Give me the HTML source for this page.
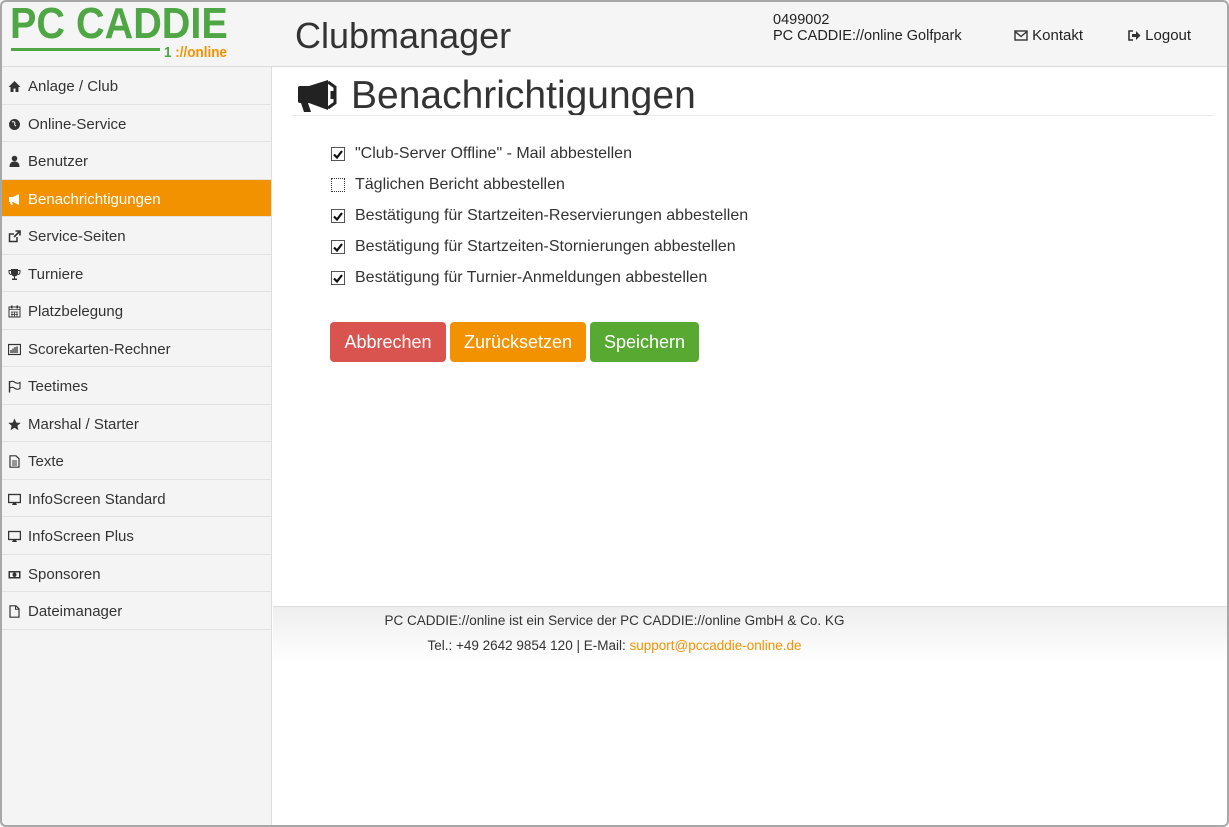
<!DOCTYPE html>
<html><head><meta charset="utf-8"><style>
*{box-sizing:border-box;margin:0;padding:0}
body{width:1229px;height:827px;background:#fff;font-family:"Liberation Sans",sans-serif;color:#333;overflow:hidden;position:relative}
.frame{position:absolute;left:0;top:0;width:1229px;height:827px;border:2px solid #a8a8a8;border-radius:6px;pointer-events:none;z-index:10}
.header{position:absolute;left:0;top:0;width:1229px;height:67px;background:#f5f5f5;border-bottom:1px solid #ddd}
.logo{position:absolute;left:10px;top:-1px;font:bold 44px "Liberation Sans",sans-serif;color:#4ea644;transform:scaleX(0.9);transform-origin:left;white-space:nowrap}
.logoline{position:absolute;left:11px;top:48px;width:149px;height:3px;background:#4ea644}
.online{position:absolute;left:164px;top:44px;font:bold 15px "Liberation Sans",sans-serif;color:#f39200;transform:scaleX(0.9);transform-origin:left}
.online b{color:#4ea644}
.cm{position:absolute;left:295px;top:15px;font-size:36px;color:#333}
.acct{position:absolute;left:773px;top:12px;font-size:14.5px;line-height:16px;color:#222}
.hl{position:absolute;top:27px;font-size:15px;color:#222}
.side{position:absolute;left:0;top:67px;width:272px;height:760px;background:#f4f4f4;border-right:1px solid #ddd}
.item{height:37.5px;border-bottom:1px solid #e2e2e2;display:flex;align-items:center;padding-left:8px;padding-top:3px;font-size:15px;color:#333}
.item svg{width:13px;height:13px;margin-right:7px;flex:none}
.item.act{background:#f39200;color:#fff}
h1{position:absolute;left:297px;top:74px;font-size:39px;font-weight:normal;color:#333;display:flex;align-items:center}
h1 svg{margin-right:14px}
.hr{position:absolute;left:292px;top:115px;width:921px;height:1px;background:#e8e8e8}
.cb{position:absolute;left:331px;font-size:16px;color:#333;display:flex;align-items:center}
.cb i{width:14px;height:14px;border:1px solid #555;margin-right:10px;display:inline-flex;align-items:center;justify-content:center;background:#fff}
.cb i.un{border:1px dotted #333}
.btn{position:absolute;top:322px;height:40px;border-radius:4px;color:#fff;font-size:18px;display:flex;align-items:center;justify-content:center;padding-top:1px}
.foot{position:absolute;left:273px;top:606px;width:954px;height:56px;border-top:1px solid #ddd;background:linear-gradient(#eee,#fff)}
.ft{position:absolute;left:0;width:1229px;text-align:center;font-size:13.5px;color:#333}
</style></head><body>
<div class="header">
<div class="logo">PC CADDIE</div>
<div class="logoline"></div>
<div class="online"><b>1</b> ://online</div>
<div class="cm">Clubmanager</div>
<div class="acct">0499002<br>PC CADDIE://online Golfpark</div>
<div class="hl" style="left:1014px"><svg width="14" height="11" viewBox="0 0 14 11" style="vertical-align:-1px"><rect x="1" y="1" width="12" height="9" fill="none" stroke="#333" stroke-width="1.4"/><path d="M1 1.5L7 6.5L13 1.5" fill="none" stroke="#333" stroke-width="1.4"/></svg> Kontakt</div>
<div class="hl" style="left:1128px"><svg width="13" height="11" viewBox="0 0 13 11" style="vertical-align:-1px"><path d="M5 1H1V10H5" fill="none" stroke="#333" stroke-width="1.6"/><path d="M4 4H8V1L12.5 5.5L8 10V7H4Z" fill="#333"/></svg> Logout</div>
</div>
<div class="side">
<div class="item"><svg viewBox="0 0 13 13"><path d="M6.5 1L0.5 7H2.5V12H5.5V8.5H7.5V12H10.5V7H12.5Z" fill="#333"/></svg>Anlage / Club</div>
<div class="item"><svg viewBox="0 0 13 13"><circle cx="6.5" cy="6.5" r="5.5" fill="#333"/><path d="M4 4Q6 3 7 5Q6 7 8 8" stroke="#f4f4f4" fill="none"/></svg>Online-Service</div>
<div class="item"><svg viewBox="0 0 13 13"><circle cx="6.5" cy="3.5" r="2.8" fill="#333"/><path d="M1.5 12Q1.5 6.5 6.5 6.5Q11.5 6.5 11.5 12Z" fill="#333"/></svg>Benutzer</div>
<div class="item act"><svg viewBox="0 0 13 13"><path d="M1 4H5L11 1V12L5 9H4L5 12H3L2 9H1Z" fill="#fff"/></svg>Benachrichtigungen</div>
<div class="item"><svg viewBox="0 0 13 13"><path d="M9 7V11.5H1.5V4H6" fill="none" stroke="#333" stroke-width="1.5"/><path d="M7.5 1H12V5.5M12 1L6 7" fill="none" stroke="#333" stroke-width="1.6"/></svg>Service-Seiten</div>
<div class="item"><svg viewBox="0 0 13 13"><path d="M3 1H10V5Q10 8 6.5 8.5Q3 8 3 5ZM6 8.5H7V10.5H9V12H4V10.5H6Z" fill="#333"/><path d="M3 2.5H1V4Q1 6 3 6.5M10 2.5H12V4Q12 6 10 6.5" fill="none" stroke="#333"/></svg>Turniere</div>
<div class="item"><svg viewBox="0 0 13 13"><rect x="1" y="2" width="11" height="10" fill="none" stroke="#333"/><path d="M1 4.5H12M3 7H10M3 9.5H10M4 7V12M6.5 7V12M9 7V12" stroke="#333" stroke-width=".8"/><rect x="3" y="0.5" width="1.5" height="3" fill="#333"/><rect x="8.5" y="0.5" width="1.5" height="3" fill="#333"/></svg>Platzbelegung</div>
<div class="item"><svg viewBox="0 0 13 13"><rect x="0.5" y="1.5" width="12" height="10" fill="none" stroke="#333" stroke-width="1.2"/><path d="M3 10V7M5 10V5.5M7 10V4M9 10V3.5" stroke="#333" stroke-width="1.3"/></svg>Scorekarten-Rechner</div>
<div class="item"><svg viewBox="0 0 13 13"><path d="M1.5 1V12.5" stroke="#333" stroke-width="1.4"/><path d="M2 2Q5 0.5 7 2.5Q9.5 4 12 2.5V8.5Q9.5 10 7 8.5Q5 6.5 2 8" fill="none" stroke="#333" stroke-width="1.1"/></svg>Teetimes</div>
<div class="item"><svg viewBox="0 0 13 13"><path d="M6.5 0.5L8.3 4.6L12.7 4.9L9.4 7.8L10.4 12.2L6.5 9.8L2.6 12.2L3.6 7.8L0.3 4.9L4.7 4.6Z" fill="#333"/></svg>Marshal / Starter</div>
<div class="item"><svg viewBox="0 0 13 13"><path d="M2 0.8H8L11 3.8V12.2H2Z" fill="none" stroke="#333" stroke-width="1.2"/><path d="M4 6H9M4 8H9M4 10H9" stroke="#333"/></svg>Texte</div>
<div class="item"><svg viewBox="0 0 13 13"><rect x="0.6" y="1.5" width="11.8" height="8" fill="none" stroke="#333" stroke-width="1.3"/><path d="M4 12H9L8 10H5Z" fill="#333"/></svg>InfoScreen Standard</div>
<div class="item"><svg viewBox="0 0 13 13"><rect x="0.6" y="1.5" width="11.8" height="8" fill="none" stroke="#333" stroke-width="1.3"/><path d="M4 12H9L8 10H5Z" fill="#333"/></svg>InfoScreen Plus</div>
<div class="item"><svg viewBox="0 0 13 13"><rect x="0.5" y="3" width="12" height="7.5" fill="#333"/><rect x="2" y="4.5" width="9" height="4.5" fill="#f4f4f4"/><ellipse cx="6.5" cy="6.75" rx="2" ry="2.3" fill="#333"/></svg>Sponsoren</div>
<div class="item"><svg viewBox="0 0 13 13"><path d="M2 0.8H8L11 3.8V12.2H2Z" fill="none" stroke="#333" stroke-width="1.2"/><path d="M7.5 1V4.3H11" fill="none" stroke="#333"/></svg>Dateimanager</div>
</div>
<h1><svg width="40" height="34" viewBox="0 0 40 34"><path d="M1 9Q1 7 3 7H12L31 1V31L12 24H11L14 33H7L4 24H3Q1 24 1 22Z" fill="#222"/><path d="M31 3L38 8V24L31 29" fill="none" stroke="#222" stroke-width="3"/><path d="M35 12V20" stroke="#222" stroke-width="3"/></svg>Benachrichtigungen</h1>
<div class="hr"></div>
<div class="cb" style="top:145px"><i><svg width="10" height="9" viewBox="0 0 10 9"><path d="M1 4.5L4 7.5L9 1" fill="none" stroke="#111" stroke-width="2.2"/></svg></i>"Club-Server Offline" - Mail abbestellen</div>
<div class="cb" style="top:176px"><i class="un"></i>Täglichen Bericht abbestellen</div>
<div class="cb" style="top:207px"><i><svg width="10" height="9" viewBox="0 0 10 9"><path d="M1 4.5L4 7.5L9 1" fill="none" stroke="#111" stroke-width="2.2"/></svg></i>Bestätigung für Startzeiten-Reservierungen abbestellen</div>
<div class="cb" style="top:238px"><i><svg width="10" height="9" viewBox="0 0 10 9"><path d="M1 4.5L4 7.5L9 1" fill="none" stroke="#111" stroke-width="2.2"/></svg></i>Bestätigung für Startzeiten-Stornierungen abbestellen</div>
<div class="cb" style="top:269px"><i><svg width="10" height="9" viewBox="0 0 10 9"><path d="M1 4.5L4 7.5L9 1" fill="none" stroke="#111" stroke-width="2.2"/></svg></i>Bestätigung für Turnier-Anmeldungen abbestellen</div>
<div class="btn" style="left:330px;width:116px;background:#d9534f">Abbrechen</div>
<div class="btn" style="left:450px;width:136px;background:#f39200">Zurücksetzen</div>
<div class="btn" style="left:590px;width:109px;background:#57a932">Speichern</div>
<div class="foot"></div>
<div class="ft" style="top:613px">PC CADDIE://online ist ein Service der PC CADDIE://online GmbH &amp; Co. KG</div>
<div class="ft" style="top:638px">Tel.: +49 2642 9854 120 | E-Mail: <span style="color:#f39200">support@pccaddie-online.de</span></div>
<div class="frame"></div>
</body></html>
